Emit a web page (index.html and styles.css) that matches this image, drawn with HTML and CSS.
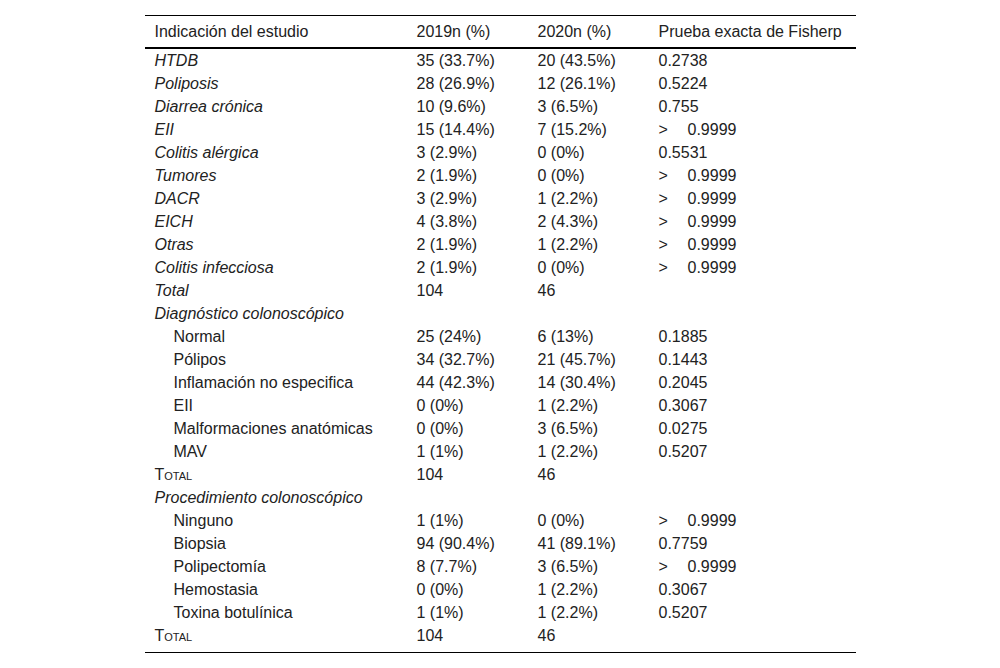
FILE: index.html
```html
<!DOCTYPE html>
<html lang="es">
<head>
<meta charset="utf-8">
<link rel="stylesheet" href="styles.css">
</head>
<body>
<div class="wrap">
<table class="tbl">
<colgroup><col class="c1"><col class="c2"><col class="c3"><col class="c4"></colgroup>
<thead>
<tr><th>Indicación del estudio</th><th>2019n (%)</th><th>2020n (%)</th><th>Prueba exacta de Fisherp</th></tr>
</thead>
<tbody>
<tr><td class="it">HTDB</td><td>35 (33.7%)</td><td>20 (43.5%)</td><td>0.2738</td></tr>
<tr><td class="it">Poliposis</td><td>28 (26.9%)</td><td>12 (26.1%)</td><td>0.5224</td></tr>
<tr><td class="it">Diarrea crónica</td><td>10 (9.6%)</td><td>3 (6.5%)</td><td>0.755</td></tr>
<tr><td class="it">EII</td><td>15 (14.4%)</td><td>7 (15.2%)</td><td><span class="gt">&gt;</span>0.9999</td></tr>
<tr><td class="it">Colitis alérgica</td><td>3 (2.9%)</td><td>0 (0%)</td><td>0.5531</td></tr>
<tr><td class="it">Tumores</td><td>2 (1.9%)</td><td>0 (0%)</td><td><span class="gt">&gt;</span>0.9999</td></tr>
<tr><td class="it">DACR</td><td>3 (2.9%)</td><td>1 (2.2%)</td><td><span class="gt">&gt;</span>0.9999</td></tr>
<tr><td class="it">EICH</td><td>4 (3.8%)</td><td>2 (4.3%)</td><td><span class="gt">&gt;</span>0.9999</td></tr>
<tr><td class="it">Otras</td><td>2 (1.9%)</td><td>1 (2.2%)</td><td><span class="gt">&gt;</span>0.9999</td></tr>
<tr><td class="it">Colitis infecciosa</td><td>2 (1.9%)</td><td>0 (0%)</td><td><span class="gt">&gt;</span>0.9999</td></tr>
<tr><td class="it">Total</td><td>104</td><td>46</td><td></td></tr>
<tr><td class="it">Diagnóstico colonoscópico</td><td></td><td></td><td></td></tr>
<tr><td class="ind">Normal</td><td>25 (24%)</td><td>6 (13%)</td><td>0.1885</td></tr>
<tr><td class="ind">Pólipos</td><td>34 (32.7%)</td><td>21 (45.7%)</td><td>0.1443</td></tr>
<tr><td class="ind">Inflamación no especifica</td><td>44 (42.3%)</td><td>14 (30.4%)</td><td>0.2045</td></tr>
<tr><td class="ind">EII</td><td>0 (0%)</td><td>1 (2.2%)</td><td>0.3067</td></tr>
<tr><td class="ind">Malformaciones anatómicas</td><td>0 (0%)</td><td>3 (6.5%)</td><td>0.0275</td></tr>
<tr><td class="ind">MAV</td><td>1 (1%)</td><td>1 (2.2%)</td><td>0.5207</td></tr>
<tr><td class="sc">Total</td><td>104</td><td>46</td><td></td></tr>
<tr><td class="it">Procedimiento colonoscópico</td><td></td><td></td><td></td></tr>
<tr><td class="ind">Ninguno</td><td>1 (1%)</td><td>0 (0%)</td><td><span class="gt">&gt;</span>0.9999</td></tr>
<tr><td class="ind">Biopsia</td><td>94 (90.4%)</td><td>41 (89.1%)</td><td>0.7759</td></tr>
<tr><td class="ind">Polipectomía</td><td>8 (7.7%)</td><td>3 (6.5%)</td><td><span class="gt">&gt;</span>0.9999</td></tr>
<tr><td class="ind">Hemostasia</td><td>0 (0%)</td><td>1 (2.2%)</td><td>0.3067</td></tr>
<tr><td class="ind">Toxina botulínica</td><td>1 (1%)</td><td>1 (2.2%)</td><td>0.5207</td></tr>
<tr class="last"><td class="sc">Total</td><td>104</td><td>46</td><td></td></tr>
</tbody>
</table>
</div>
</body>
</html>
```
FILE: styles.css
```css
html, body { margin: 0; padding: 0; background: #fff; }
body {
  font-family: "Liberation Sans", Arial, sans-serif;
  font-size: 16px;
  line-height: 18px;
  color: #222;
}
.wrap { padding-top: 15px; display: flex; justify-content: center; }
.tbl {
  width: 711px;
  border-collapse: collapse;
  table-layout: fixed;
  border-top: 1px solid #000;
  border-bottom: 1px solid #000;
}
.c1 { width: 262px; }
.c2 { width: 121px; }
.c3 { width: 121px; }
.c4 { width: 207px; }
.tbl th {
  font-weight: normal;
  text-align: left;
  height: 31px;
  padding: 0 0 0 10px;
  border-bottom: 2px solid #000;
  vertical-align: middle;
}
.tbl td {
  height: 23px;
  padding: 0 0 0 10px;
  vertical-align: middle;
  white-space: nowrap;
}
.tbl tr.last td { padding-bottom: 5px; }
.it { font-style: italic; }
.tbl td.ind { padding-left: 29px; }
.sc { font-variant: small-caps; }
.gt { display: inline-block; width: 29px; }
```
